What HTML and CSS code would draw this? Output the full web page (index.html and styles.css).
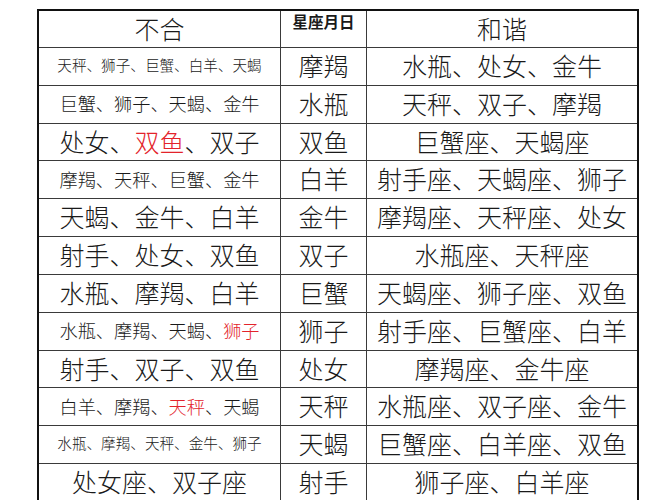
FILE: index.html
```html
<!DOCTYPE html>
<html lang="zh">
<head>
<meta charset="utf-8">
<title>星座配对</title>
<link rel="stylesheet" href="styles.css">
</head>
<body>
<div class="page">
  <div class="chart">
    <div class="cell lg">不合</div>
    <div class="cell hd">星座月日</div>
    <div class="cell lg">和谐</div>

    <div class="cell sm">天秤、狮子、巨蟹、白羊、天蝎</div>
    <div class="cell lg">摩羯</div>
    <div class="cell lg">水瓶、处女、金牛</div>

    <div class="cell md">巨蟹、狮子、天蝎、金牛</div>
    <div class="cell lg">水瓶</div>
    <div class="cell lg">天秤、双子、摩羯</div>

    <div class="cell lg">处女、<span class="red">双鱼</span>、双子</div>
    <div class="cell lg">双鱼</div>
    <div class="cell lg">巨蟹座、天蝎座</div>

    <div class="cell md">摩羯、天秤、巨蟹、金牛</div>
    <div class="cell lg">白羊</div>
    <div class="cell lg">射手座、天蝎座、狮子</div>

    <div class="cell lg">天蝎、金牛、白羊</div>
    <div class="cell lg">金牛</div>
    <div class="cell lg">摩羯座、天秤座、处女</div>

    <div class="cell lg">射手、处女、双鱼</div>
    <div class="cell lg">双子</div>
    <div class="cell lg">水瓶座、天秤座</div>

    <div class="cell lg">水瓶、摩羯、白羊</div>
    <div class="cell lg">巨蟹</div>
    <div class="cell lg">天蝎座、狮子座、双鱼</div>

    <div class="cell md">水瓶、摩羯、天蝎、<span class="red">狮子</span></div>
    <div class="cell lg">狮子</div>
    <div class="cell lg">射手座、巨蟹座、白羊</div>

    <div class="cell lg">射手、双子、双鱼</div>
    <div class="cell lg">处女</div>
    <div class="cell lg">摩羯座、金牛座</div>

    <div class="cell md">白羊、摩羯、<span class="red">天秤</span>、天蝎</div>
    <div class="cell lg">天秤</div>
    <div class="cell lg">水瓶座、双子座、金牛</div>

    <div class="cell sm">水瓶、摩羯、天秤、金牛、狮子</div>
    <div class="cell lg">天蝎</div>
    <div class="cell lg">巨蟹座、白羊座、双鱼</div>

    <div class="cell lg">处女座、双子座</div>
    <div class="cell lg">射手</div>
    <div class="cell lg">狮子座、白羊座</div>
  </div>
</div>
</body>
</html>
```

FILE: styles.css
```css
html, body {
  margin: 0;
  padding: 0;
  background: #ffffff;
}

.page {
  padding: 9px 0 0 37px;
  height: 500px;
  box-sizing: border-box;
  overflow: hidden;
  font-family: "Noto Sans CJK SC", "Noto Sans", sans-serif;
  font-weight: 300;
  color: #1a1a1a;
}

.chart {
  display: grid;
  width: max-content;
  grid-template-columns: 241px 85px 270px;
  grid-template-rows: 36px repeat(12, 36.83px);
  gap: 1px;
  background: #3a3a3a;
  border: 2px solid #111111;
}

.cell {
  background: #ffffff;
  display: flex;
  align-items: center;
  justify-content: center;
  white-space: nowrap;
  line-height: 1;
  padding-bottom: 2px;
}

.lg {
  font-size: 25px;
}

.md {
  font-size: 18.2px;
}

.sm {
  font-size: 14.6px;
}

.hd {
  font-size: 15.5px;
  font-weight: 700;
  align-items: flex-start;
  padding-top: 3px;
  padding-bottom: 0;
}

.red {
  color: #e3232b;
}
```
